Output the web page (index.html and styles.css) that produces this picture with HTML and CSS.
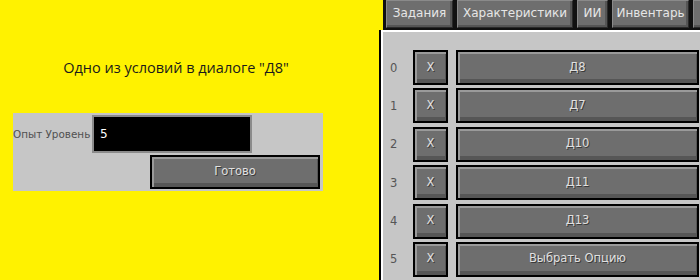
FILE: index.html
```html
<!DOCTYPE html>
<html lang="ru">
  <head>
    <meta charset="UTF-8" />
    <meta name="viewport" content="width=device-width, initial-scale=1.0" />
    <title>dialog editor</title>
    <link rel="stylesheet" href="styles.css">
  </head>
  <body>
    <div class="left">
      <h1 class="title">Одно из условий в диалоге "Д8"</h1>
      <div class="form">
        <div class="form-row">
          <span class="label">Опыт Уровень</span>
          <div class="input">5</div>
        </div>
        <div class="form-row end">
          <button class="mc-btn done">Готово</button>
        </div>
      </div>
    </div>
    <div class="right">
      <div class="tabs">
        <div class="tab w1">Задания</div>
        <div class="tab w2">Характеристики</div>
        <div class="tab w3">ИИ</div>
        <div class="tab w4">Инвентарь</div>
        <div class="tab w5"></div>
      </div>
      <div class="panel">
        <div class="row"><span class="num">0</span><button class="mc-btn x">X</button><button class="mc-btn opt">Д8</button></div>
        <div class="row"><span class="num">1</span><button class="mc-btn x">X</button><button class="mc-btn opt">Д7</button></div>
        <div class="row"><span class="num">2</span><button class="mc-btn x">X</button><button class="mc-btn opt">Д10</button></div>
        <div class="row"><span class="num">3</span><button class="mc-btn x">X</button><button class="mc-btn opt">Д11</button></div>
        <div class="row"><span class="num">4</span><button class="mc-btn x">X</button><button class="mc-btn opt">Д13</button></div>
        <div class="row"><span class="num">5</span><button class="mc-btn x">X</button><button class="mc-btn opt">Выбрать Опцию</button></div>
      </div>
    </div>
  </body>
</html>
```

FILE: styles.css
```css
* {
  padding: 0;
  margin: 0;
  box-sizing: border-box;
}
html,
body {
  width: 700px;
  height: 280px;
  overflow: hidden;
}
body {
  display: flex;
  background: #fff200;
  font-family: "DejaVu Sans", sans-serif;
}
.left {
  width: 379px;
  flex-shrink: 0;
  padding-top: 58px;
}
.title {
  width: 352px;
  text-align: center;
  font-family: "Open Sans", "Liberation Sans", sans-serif;
  font-weight: normal;
  font-size: 14.5px;
  color: #1a1a1a;
  height: 55px;
}
.form {
  margin-left: 13px;
  width: 310px;
  height: 78px;
  background: #c6c6c6;
  padding-top: 2px;
}
.form-row {
  display: flex;
  align-items: center;
}
.form-row.end {
  justify-content: flex-end;
  padding-right: 3px;
  margin-top: 2px;
}
.label {
  width: 79px;
  white-space: nowrap;
  font-size: 10.4px;
  color: #505050;
}
.input {
  width: 160px;
  height: 38px;
  background: #000;
  border: 2px solid #8b8b8b;
  color: #fff;
  font-size: 12px;
  line-height: 34px;
  padding-left: 6px;
}
.mc-btn {
  display: flex;
  align-items: center;
  justify-content: center;
  border: 2px solid #000;
  background: #6e6e6e;
  box-shadow: inset 2px 2px #9a9a9a, inset -1px -4px #565656;
  color: #e0e0e0;
  text-shadow: 1px 1px #3a3a3a;
  font-family: "DejaVu Sans", sans-serif;
  font-size: 11.5px;
  padding-bottom: 2px;
}
.done {
  width: 170px;
  height: 34px;
}
.right {
  flex: 1;
  min-width: 0;
  display: flex;
  flex-direction: column;
}
.tabs {
  height: 30px;
  display: flex;
  gap: 4px;
  background: #111;
  padding-left: 3px;
  margin-left: 4px;
  overflow: hidden;
}
.tab {
  height: 28px;
  background: #6e6e6e;
  border: 1px solid #2a2a2a;
  border-top-color: #8a8a8a;
  border-left-color: #8a8a8a;
  box-shadow: inset -2px -2px #555;
  color: #e6e6e6;
  font-size: 12px;
  line-height: 25px;
  text-align: center;
  flex-shrink: 0;
}
.w1 { width: 67px; }
.w2 { width: 116px; }
.w3 { width: 31px; }
.w4 { width: 77px; }
.w5 { width: 20px; }
.panel {
  flex: 1;
  background: #c6c6c6;
  border-left: 2px solid #000;
  box-shadow: inset 2px 2px #fff;
  padding-top: 20px;
  display: flex;
  flex-direction: column;
  gap: 3.4px;
}
.row {
  display: flex;
  align-items: center;
  height: 35px;
}
.num {
  width: 32px;
  padding-left: 9px;
  font-size: 11.5px;
  color: #555;
}
.x {
  width: 35px;
  height: 35px;
  margin-right: 8px;
}
.opt {
  width: 243px;
  height: 35px;
}
```
